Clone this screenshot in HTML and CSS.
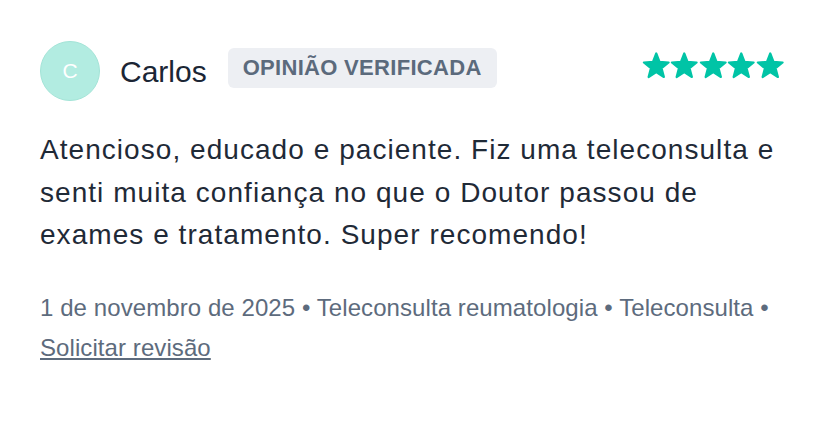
FILE: index.html
```html
<!DOCTYPE html>
<html lang="pt">
<head>
<meta charset="utf-8">
<link rel="stylesheet" href="styles.css">
</head>
<body>
<div class="review">
  <div class="header">
    <div class="avatar">C</div>
    <div class="name">Carlos</div>
    <div class="badge">Opinião verificada</div>
    <div class="stars">
      <svg viewBox="-14.25 -14.5 28.5 28"><path d="M0 -13 L3.29 -4.53 L12.36 -4.02 L5.33 1.73 L7.64 10.52 L0 5.6 L-7.64 10.52 L-5.33 1.73 L-12.36 -4.02 L-3.29 -4.53 Z"/></svg>
      <svg viewBox="-14.25 -14.5 28.5 28"><path d="M0 -13 L3.29 -4.53 L12.36 -4.02 L5.33 1.73 L7.64 10.52 L0 5.6 L-7.64 10.52 L-5.33 1.73 L-12.36 -4.02 L-3.29 -4.53 Z"/></svg>
      <svg viewBox="-14.25 -14.5 28.5 28"><path d="M0 -13 L3.29 -4.53 L12.36 -4.02 L5.33 1.73 L7.64 10.52 L0 5.6 L-7.64 10.52 L-5.33 1.73 L-12.36 -4.02 L-3.29 -4.53 Z"/></svg>
      <svg viewBox="-14.25 -14.5 28.5 28"><path d="M0 -13 L3.29 -4.53 L12.36 -4.02 L5.33 1.73 L7.64 10.52 L0 5.6 L-7.64 10.52 L-5.33 1.73 L-12.36 -4.02 L-3.29 -4.53 Z"/></svg>
      <svg viewBox="-14.25 -14.5 28.5 28"><path d="M0 -13 L3.29 -4.53 L12.36 -4.02 L5.33 1.73 L7.64 10.52 L0 5.6 L-7.64 10.52 L-5.33 1.73 L-12.36 -4.02 L-3.29 -4.53 Z"/></svg>
    </div>
  </div>
  <p class="text">Atencioso, educado e paciente. Fiz uma teleconsulta e senti muita confiança no que o Doutor passou de exames e tratamento. Super recomendo!</p>
  <p class="meta">1 de novembro de 2025 • Teleconsulta reumatologia • Teleconsulta • <a class="link" href="#">Solicitar revisão</a></p>
</div>
</body>
</html>
```
FILE: styles.css
```css
html, body {
  margin: 0;
  padding: 0;
  background: #ffffff;
}
body {
  font-family: "Liberation Sans", Arial, sans-serif;
}
.review {
  padding: 41px 40px 0 40px;
}
.header {
  display: flex;
  align-items: center;
  height: 60px;
}
.avatar {
  width: 58px;
  height: 58px;
  border-radius: 50%;
  background: #b2ece1;
  border: 1px solid #a3e4d7;
  color: #ffffff;
  font-size: 21px;
  display: flex;
  align-items: center;
  justify-content: center;
  flex-shrink: 0;
}
.name {
  margin-left: 20px;
  font-size: 30px;
  color: #1b2635;
  margin-top: 2px;
}
.badge {
  margin-left: 21px;
  height: 40px;
  box-sizing: border-box;
  padding: 0 15px;
  display: flex;
  align-items: center;
  background: #edeff3;
  border-radius: 6px;
  color: #5b6a7c;
  font-weight: bold;
  font-size: 22px;
  letter-spacing: 0.3px;
  text-transform: uppercase;
  margin-top: -6px;
}
.stars {
  margin-left: auto;
  margin-right: 4px;
  display: flex;
  margin-top: -10px;
}
.stars svg {
  width: 28.5px;
  height: 28px;
  fill: #00c4a6;
  stroke: #00c4a6;
  stroke-width: 2.2;
  stroke-linejoin: round;
}
.text {
  margin: 28px 0 0 0;
  font-size: 28px;
  line-height: 42.5px;
  letter-spacing: 1.05px;
  color: #1f2a37;
}
.meta {
  margin: 31px 0 0 0;
  font-size: 24px;
  line-height: 40.5px;
  letter-spacing: 0.08px;
  color: #5d6b7d;
}
.link {
  color: #5d6b7d;
  text-decoration: underline;
}
```
